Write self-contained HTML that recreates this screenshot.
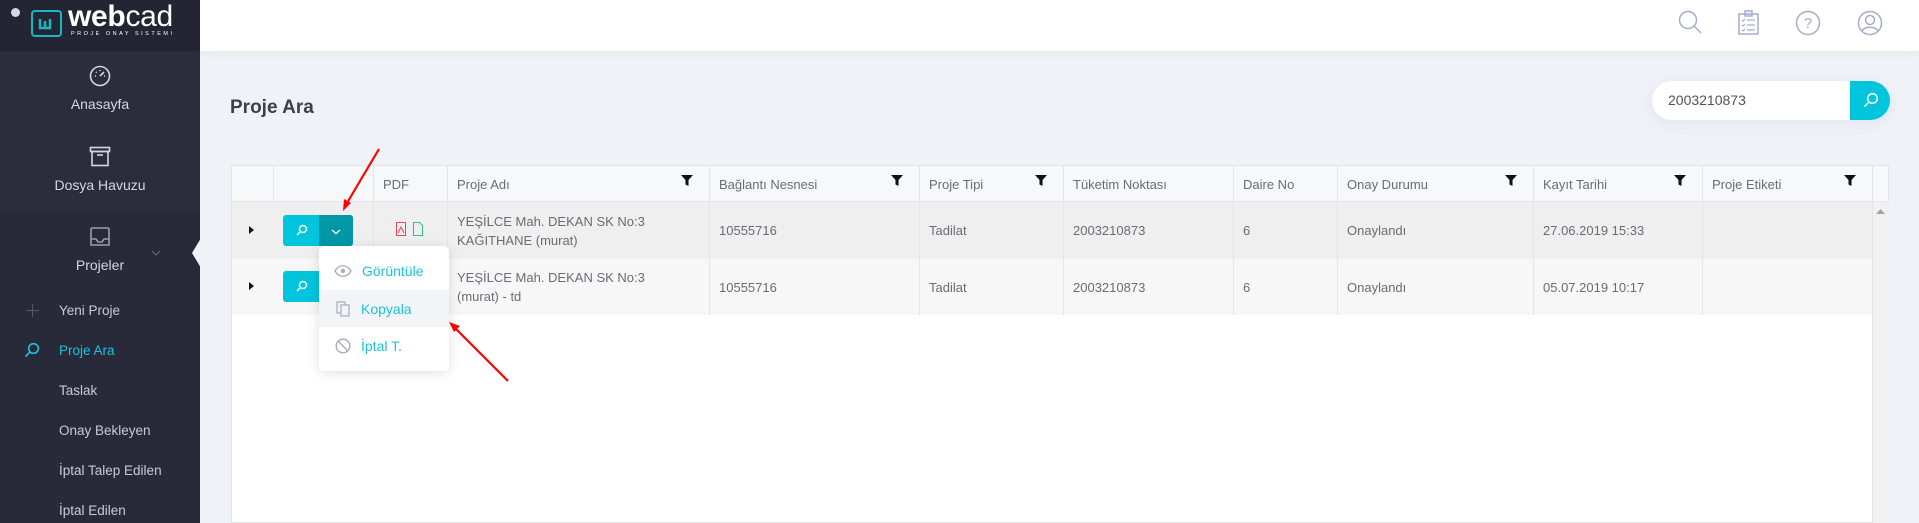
<!DOCTYPE html>
<html><head><meta charset="utf-8"><style>
*{box-sizing:border-box;margin:0;padding:0}
body{width:1919px;height:523px;overflow:hidden;background:#f0f2f7;font-family:"Liberation Sans",sans-serif;color:#575962;position:relative}
.abs{position:absolute}
#side{left:0;top:0;width:200px;height:523px;background:#282a39}
#side .top{left:0;top:0;width:200px;height:51px;background:#242533}
#side .mid{left:0;top:51px;width:200px;height:160px;background:#2b2d3d}
.nav{width:200px;text-align:center;color:#d5d6e0;font-size:14px}
.sub{left:59px;color:#c9cad6;font-size:13.5px}
#hdr{left:200px;top:0;width:1719px;height:51px;background:#fff;box-shadow:0 2px 10px rgba(0,0,0,.05)}
.tbl{left:231px;top:165px;width:1658px;height:358px;background:#fff;border:1px solid #e3e5ea}
.cell{position:absolute;font-size:13px;color:#6a6b75;display:flex;align-items:center;padding-left:10px;line-height:19px}
.vl{position:absolute;width:1px;background:#e3e5ea}
.menu{left:319px;top:246px;width:130px;height:125px;background:#fff;border-radius:5px;box-shadow:0 2px 12px rgba(0,0,0,.12)}
.mi{position:absolute;left:0;width:130px;height:37px;display:flex;align-items:center;color:#19c3dc;font-size:14px}
</style></head><body>
<div id="side" class="abs">
 <div class="top abs"></div><div class="mid abs"></div>
 <div class="abs" style="left:11px;top:8px;width:9px;height:9px;border-radius:50%;background:#d8d8dc"></div>
 <div class="abs" style="left:31px;top:10px;width:31px;height:27px;border:2.5px solid #14b8c8;border-radius:4px"></div>
 <svg class="abs" style="left:31px;top:10px" width="31" height="27"><path d="M9 9v9h5v-7M14 11v7h5V9" fill="none" stroke="#14b8c8" stroke-width="2.4"/></svg>
 <div class="abs" style="left:68px;top:2px;font-size:30px;line-height:30px;font-weight:bold;color:#fff;letter-spacing:-0.3px">web<span style="font-weight:normal">cad</span></div>
 <div class="abs" style="left:71px;top:31px;font-size:5.5px;line-height:6px;letter-spacing:2.5px;color:#fff">PROJE ONAY SISTEMI</div>
 <svg class="abs" style="left:89px;top:65px" width="22" height="22"><circle cx="11" cy="11" r="9.5" fill="none" stroke="#d5d6e0" stroke-width="1.6"/><path d="M11 11l4-4M6 11h1M15 11h1M11 5v1M7 7l.7.7" stroke="#d5d6e0" stroke-width="1.6"/></svg>
 <div class="nav abs" style="top:96px">Anasayfa</div>
 <svg class="abs" style="left:89px;top:146px" width="22" height="22"><rect x="1.5" y="1.5" width="19" height="4" fill="none" stroke="#d5d6e0" stroke-width="1.6"/><rect x="3" y="5.5" width="16" height="14" fill="none" stroke="#d5d6e0" stroke-width="1.6"/><path d="M8 9h6" stroke="#d5d6e0" stroke-width="1.6"/></svg>
 <div class="nav abs" style="top:177px">Dosya Havuzu</div>
 <svg class="abs" style="left:89px;top:226px" width="22" height="22"><path d="M3 2h16l1 1v16H2V3zM2 13h5l2 3h4l2-3h5" fill="none" stroke="#9a9cb0" stroke-width="1.6"/></svg>
 <div class="nav abs" style="top:257px">Projeler</div>
 <svg class="abs" style="left:151px;top:250px" width="10" height="6"><path d="M1 1l4 4 4-4" fill="none" stroke="#6b6d80" stroke-width="1"/></svg>
 <svg class="abs" style="left:191px;top:238px" width="10" height="30"><path d="M10 0L1 15l9 15z" fill="#f0f2f7"/></svg>
 <div class="abs" style="left:26px;top:310px;width:13px;height:1px;background:#555769"></div><div class="abs" style="left:32px;top:304px;width:1px;height:13px;background:#555769"></div>
 <div class="sub abs" style="top:303px">Yeni Proje</div>
 <svg class="abs" style="left:24px;top:342px" width="16" height="16"><circle cx="9.5" cy="6.5" r="4.8" fill="none" stroke="#19c3dc" stroke-width="1.6"/><path d="M6 10l-4.5 4.5" stroke="#19c3dc" stroke-width="1.6"/></svg>
 <div class="sub abs" style="top:343px;color:#19c3dc">Proje Ara</div>
 <div class="sub abs" style="top:383px">Taslak</div>
 <div class="sub abs" style="top:423px">Onay Bekleyen</div>
 <div class="sub abs" style="top:463px">İptal Talep Edilen</div>
 <div class="sub abs" style="top:503px">İptal Edilen</div>
</div>
<div id="hdr" class="abs">
 <svg class="abs" style="left:1478px;top:10px" width="26" height="26"><circle cx="10" cy="10" r="8.5" fill="none" stroke="#a5acd0" stroke-width="1.5"/><path d="M16 16l7 7" stroke="#a5acd0" stroke-width="1.5"/></svg>
 <svg class="abs" style="left:1538px;top:10px" width="22" height="26"><rect x="1" y="4" width="19" height="20" fill="none" stroke="#a5acd0" stroke-width="1.5"/><rect x="7" y="1" width="7" height="5" fill="none" stroke="#a5acd0" stroke-width="1.5"/><path d="M4 10l1 1 2-2M4 15l1 1 2-2M4 20l1 1 2-2M9 10h8M9 15h8M9 20h8" fill="none" stroke="#a5acd0" stroke-width="1.2"/></svg>
 <svg class="abs" style="left:1595px;top:10px" width="26" height="26"><circle cx="13" cy="13" r="11.5" fill="none" stroke="#a5acd0" stroke-width="1.5"/><text x="13" y="18" text-anchor="middle" font-size="15" fill="#a5acd0" font-family="Liberation Sans">?</text></svg>
 <svg class="abs" style="left:1657px;top:10px" width="26" height="26"><circle cx="13" cy="13" r="11.5" fill="none" stroke="#a5acd0" stroke-width="1.5"/><circle cx="13" cy="10" r="4.5" fill="none" stroke="#a5acd0" stroke-width="1.5"/><path d="M5 21c2-5 14-5 16 0" fill="none" stroke="#a5acd0" stroke-width="1.5"/></svg>
</div>
<div class="abs" style="left:230px;top:97px;font-size:19px;font-weight:bold;color:#3f4047">Proje Ara</div>
<div class="abs" style="left:1652px;top:81px;width:238px;height:39px;background:#fff;border-radius:20px;box-shadow:0 3px 14px rgba(80,110,180,.1);overflow:hidden">
 <div class="abs" style="left:16px;top:11px;font-size:14px;color:#555">2003210873</div>
 <div class="abs" style="left:198px;top:0;width:40px;height:39px;background:#00c5dc"></div>
 <svg class="abs" style="left:211px;top:11px" width="16" height="16"><circle cx="9.5" cy="6.5" r="4.8" fill="none" stroke="#fff" stroke-width="1.5"/><path d="M6 10l-4.5 4.5" stroke="#fff" stroke-width="1.5"/></svg>
</div>
<div class="tbl abs"></div>
<div class="abs" style="left:232px;top:166px;width:1656px;height:36px;background:#f7f8fa;border-bottom:1px solid #e3e5ea"></div>
<div class="abs" style="left:232px;top:202px;width:1640px;height:57px;background:#efefef"></div>
<div class="abs" style="left:232px;top:259px;width:1640px;height:56px;background:#f7f7f7"></div>
<div class="abs" style="left:1872px;top:202px;width:17px;height:321px;background:#f1f1f1;border-left:1px solid #e3e5ea"></div>
<svg class="abs" style="left:1876px;top:209px" width="9" height="5"><path d="M0 5l4.5-5 4.5 5z" fill="#a3a3a3"/></svg>
<div class="vl" style="left:273px;top:166px;height:36px"></div>
<div class="vl" style="left:373px;top:166px;height:149px"></div>
<div class="vl" style="left:447px;top:166px;height:149px"></div>
<div class="vl" style="left:709px;top:166px;height:149px"></div>
<div class="vl" style="left:919px;top:166px;height:149px"></div>
<div class="vl" style="left:1063px;top:166px;height:149px"></div>
<div class="vl" style="left:1233px;top:166px;height:149px"></div>
<div class="vl" style="left:1337px;top:166px;height:149px"></div>
<div class="vl" style="left:1533px;top:166px;height:149px"></div>
<div class="vl" style="left:1702px;top:166px;height:149px"></div>
<div class="vl" style="left:1872px;top:166px;height:36px"></div>
<div class="cell" style="left:373px;top:166px;height:36px">PDF</div>
<div class="cell" style="left:447px;top:166px;height:36px">Proje Adı</div>
<div class="cell" style="left:709px;top:166px;height:36px">Bağlantı Nesnesi</div>
<div class="cell" style="left:919px;top:166px;height:36px">Proje Tipi</div>
<div class="cell" style="left:1063px;top:166px;height:36px">Tüketim Noktası</div>
<div class="cell" style="left:1233px;top:166px;height:36px">Daire No</div>
<div class="cell" style="left:1337px;top:166px;height:36px">Onay Durumu</div>
<div class="cell" style="left:1533px;top:166px;height:36px">Kayıt Tarihi</div>
<div class="cell" style="left:1702px;top:166px;height:36px">Proje Etiketi</div>
<svg class="abs" style="left:0;top:0;pointer-events:none" width="1919" height="523">
 <g fill="#111"><path d="M681 175h12l-4.5 5v6l-3-1.5v-4.5z"/><path d="M891 175h12l-4.5 5v6l-3-1.5v-4.5z"/><path d="M1035 175h12l-4.5 5v6l-3-1.5v-4.5z"/><path d="M1505 175h12l-4.5 5v6l-3-1.5v-4.5z"/><path d="M1674 175h12l-4.5 5v6l-3-1.5v-4.5z"/><path d="M1844 175h12l-4.5 5v6l-3-1.5v-4.5z"/>
 <path d="M249 226l5 4-5 4z"/><path d="M249 282l5 4-5 4z"/></g>
 <rect x="396.5" y="222.5" width="9" height="13" fill="none" stroke="#e8445a"/><path d="M398 233l3-6 3 6" fill="none" stroke="#e8445a"/>
 <path d="M413.5 222.5h6l3 3v10h-9z" fill="none" stroke="#2ec08a"/>
</svg>
<div class="cell" style="left:447px;top:202px;height:57px">YEŞİLCE Mah. DEKAN SK No:3<br>KAĞITHANE (murat)</div>
<div class="cell" style="left:709px;top:202px;height:57px">10555716</div>
<div class="cell" style="left:919px;top:202px;height:57px">Tadilat</div>
<div class="cell" style="left:1063px;top:202px;height:57px">2003210873</div>
<div class="cell" style="left:1233px;top:202px;height:57px">6</div>
<div class="cell" style="left:1337px;top:202px;height:57px">Onaylandı</div>
<div class="cell" style="left:1533px;top:202px;height:57px">27.06.2019 15:33</div>
<div class="cell" style="left:447px;top:259px;height:56px">YEŞİLCE Mah. DEKAN SK No:3<br>(murat) - td</div>
<div class="cell" style="left:709px;top:259px;height:56px">10555716</div>
<div class="cell" style="left:919px;top:259px;height:56px">Tadilat</div>
<div class="cell" style="left:1063px;top:259px;height:56px">2003210873</div>
<div class="cell" style="left:1233px;top:259px;height:56px">6</div>
<div class="cell" style="left:1337px;top:259px;height:56px">Onaylandı</div>
<div class="cell" style="left:1533px;top:259px;height:56px">05.07.2019 10:17</div>
<div class="abs" style="left:283px;top:215px;width:70px;height:31px;background:#00c5dc;border-radius:3px;overflow:hidden"><div class="abs" style="left:36px;top:0;width:34px;height:31px;background:#0097a7"></div></div>
<div class="abs" style="left:283px;top:271px;width:70px;height:31px;background:#00c5dc;border-radius:3px"></div>
<svg class="abs" style="left:0;top:0" width="1919" height="523">
 <g fill="none" stroke="#fff" stroke-width="1.4"><circle cx="303" cy="229" r="3.5"/><path d="M300.5 231.5l-3.5 3.5"/><circle cx="303" cy="285" r="3.5"/><path d="M300.5 287.5l-3.5 3.5"/><path d="M332 230l4 3.5 4-3.5"/></g>
</svg>
<div class="menu abs">
 <div class="mi" style="top:6px"><svg style="margin:0 10px 0 15px" width="18" height="12"><path d="M1 6c4-7 12-7 16 0-4 7-12 7-16 0z" fill="none" stroke="#a8a9bc" stroke-width="1.3"/><circle cx="9" cy="6" r="2.2" fill="#a8a9bc"/></svg>Görüntüle</div>
 <div class="mi" style="top:44px;background:#f3f4f8"><svg style="margin:0 10px 0 17px" width="15" height="16"><rect x="1" y="1" width="8" height="11" fill="none" stroke="#a8a9bc" stroke-width="1.2"/><rect x="5" y="4" width="8" height="11" fill="#f3f4f8" stroke="#a8a9bc" stroke-width="1.2"/></svg>Kopyala</div>
 <div class="mi" style="top:81px"><svg style="margin:0 10px 0 16px" width="16" height="16"><circle cx="8" cy="8" r="6.8" fill="none" stroke="#a8a9bc" stroke-width="1.4"/><path d="M3.3 3.3l9.4 9.4" stroke="#a8a9bc" stroke-width="1.4"/></svg>İptal T.</div>
</div>
<svg class="abs" style="left:0;top:0" width="1919" height="523">
 <path d="M379 149L347 203" stroke="#f00" stroke-width="2.2"/><path d="M343 211l1-12 7 4z" fill="#f00"/>
 <path d="M508 381L456 329" stroke="#f00" stroke-width="2.2"/><path d="M449 322l11 4-6 6z" fill="#f00"/>
</svg>
</body></html>
